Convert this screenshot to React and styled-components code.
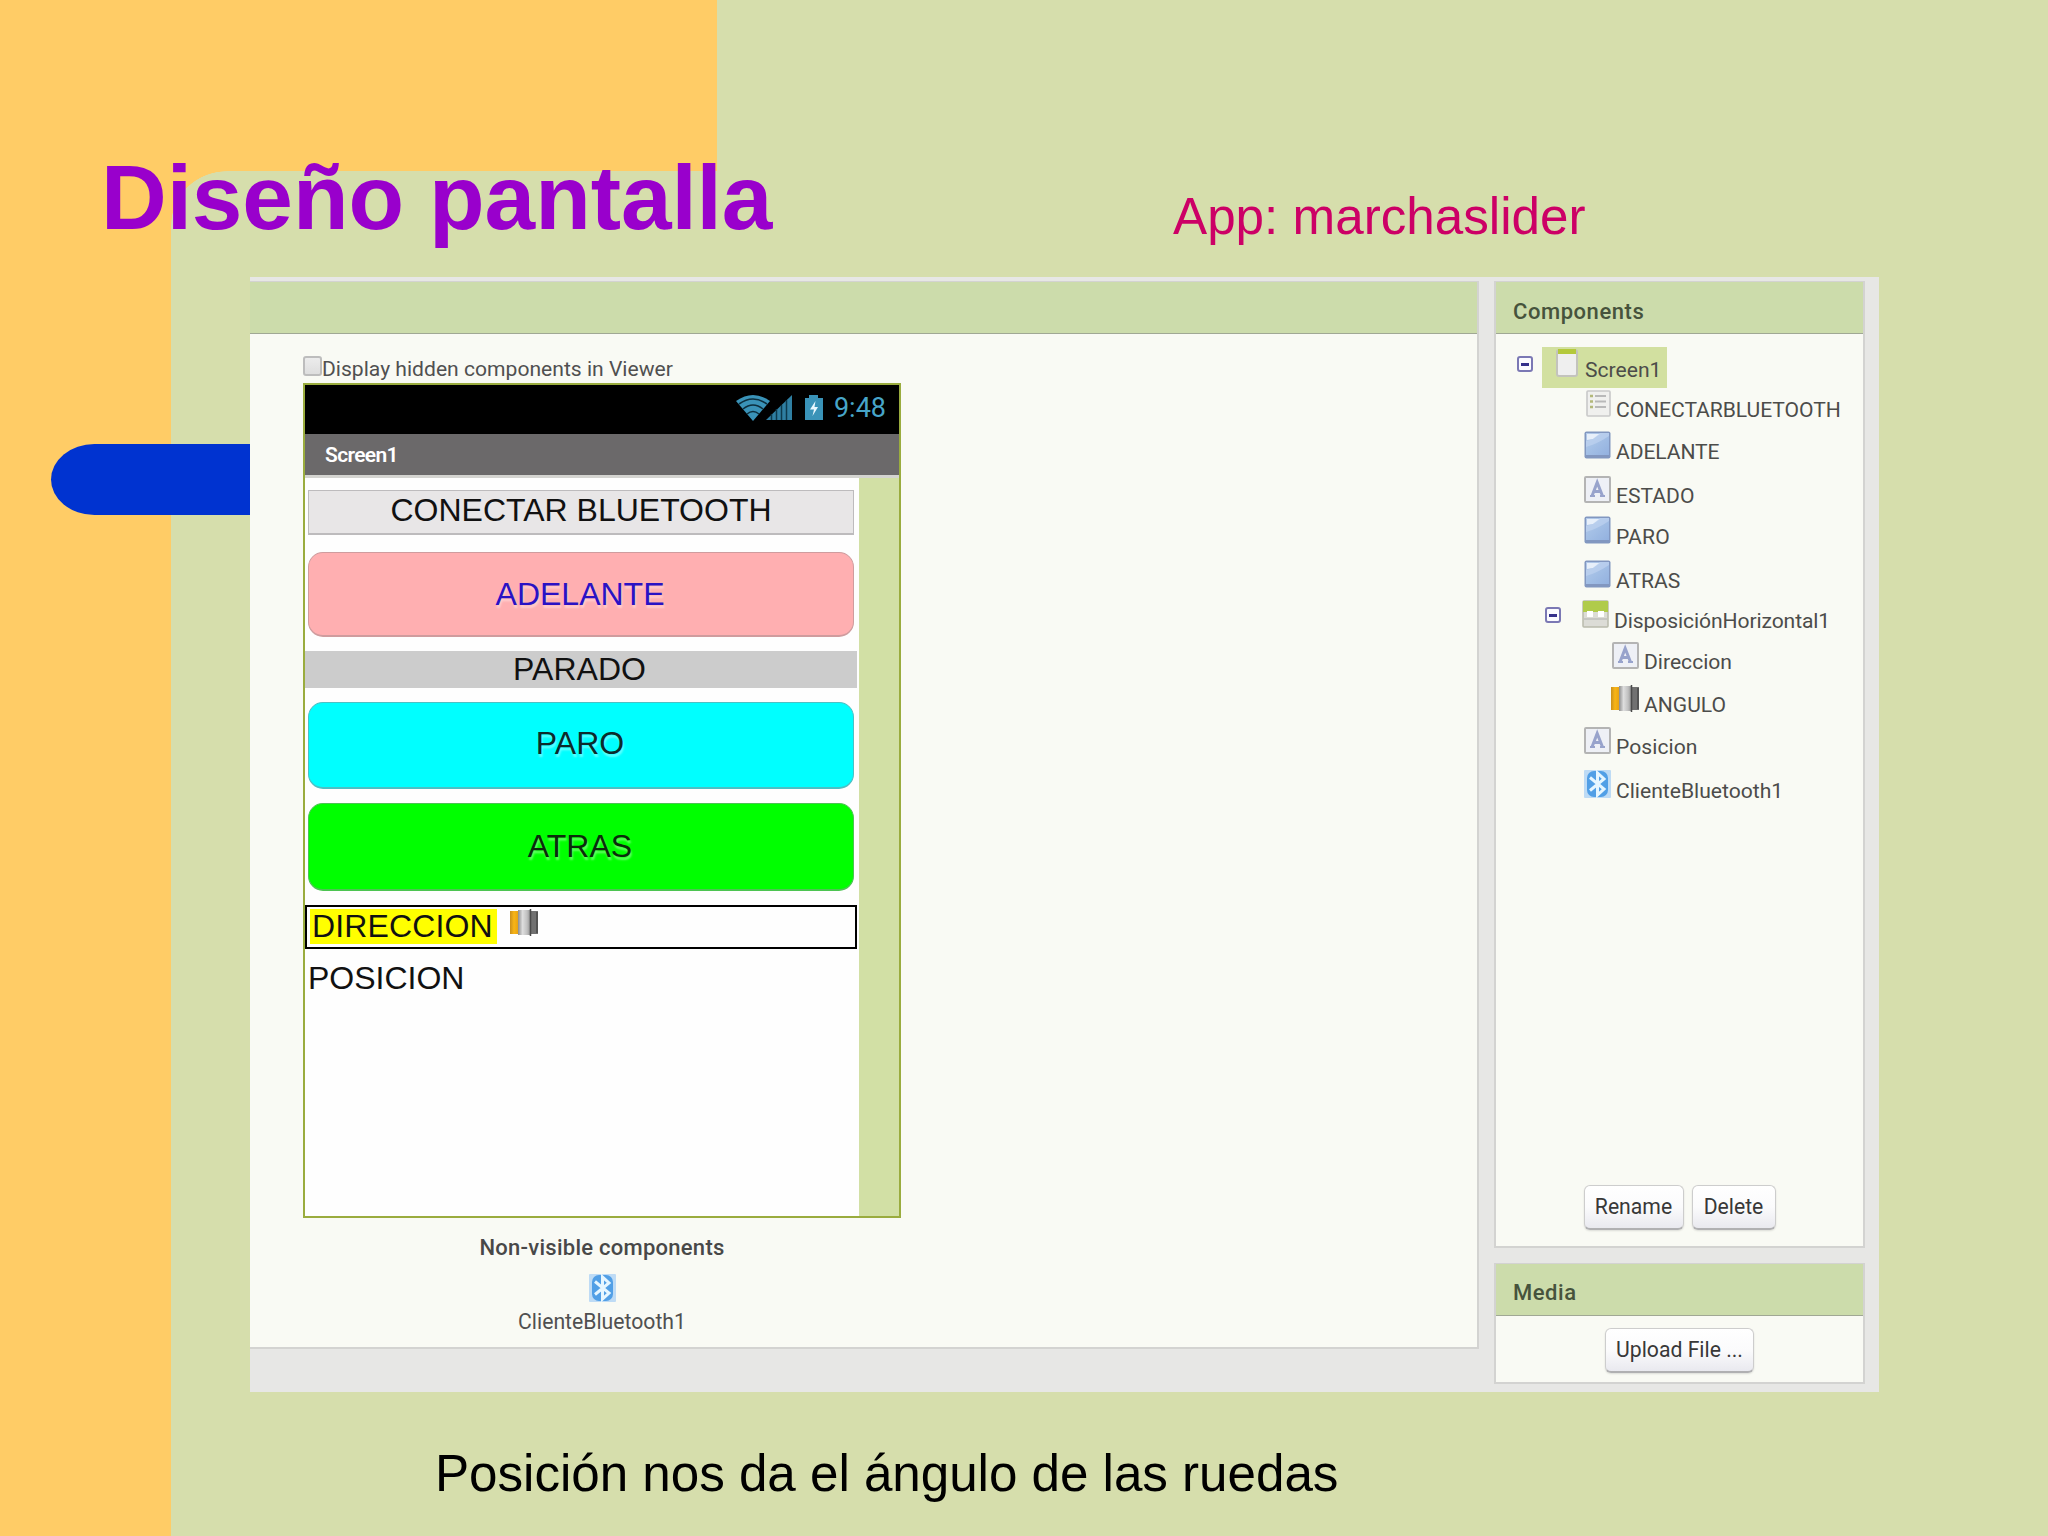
import React from "react";
import styled, { createGlobalStyle } from "styled-components";

const Global = createGlobalStyle`
  * { box-sizing: border-box; }
  html, body { margin: 0; padding: 0; }
  body { overflow: hidden; }
  svg { display: block; flex: none; }
`;

const sans = `"Liberation Sans", Arial, sans-serif`;
const ui = `Roboto, "Noto Sans", sans-serif`;

/* ---------- slide ---------- */

const Slide = styled.main`
  position: relative;
  width: 2048px;
  height: 1536px;
  overflow: hidden;
  background: #d6deac;
  font-family: ${sans};
`;

const Backdrop = styled.div`
  position: absolute;
  inset: 0;
  display: flex;
  flex-direction: column;
`;

const TopBand = styled.div`
  width: 717px;
  height: 171px;
  background: #ffcc66;
`;

const SideBand = styled.div`
  display: flex;
  flex: 1;
  &::before {
    content: "";
    width: 171px;
    background: #ffcc66;
  }
`;

const InnerCorner = styled.div`
  width: 56px;
  height: 54px;
  background: radial-gradient(ellipse 56px 54px at 100% 100%, transparent 99%, #ffcc66 100%);
`;

const Pill = styled.div`
  position: absolute;
  left: 51px;
  top: 443.5px;
  width: 260px;
  height: 71.5px;
  border-radius: 44px 0 0 44px / 36px 0 0 36px;
  background: #0033d0;
`;

const Content = styled.div`
  position: relative;
  display: flex;
  flex-direction: column;
  align-items: flex-start;
`;

const Heading = styled.header`
  display: flex;
  align-items: flex-start;
  height: 277px;
  padding-left: 101px;
`;

const Title = styled.h1`
  width: 1072px;
  margin: 146px 0 0;
  font-size: 91px;
  line-height: 104px;
  font-weight: 700;
  letter-spacing: -0.08px;
  color: #9900cc;
`;

const Subtitle = styled.p`
  margin: 187px 0 0;
  font-size: 51.2px;
  line-height: 60px;
  color: #cc0066;
  white-space: nowrap;
`;

const Caption = styled.p`
  margin: 52px 0 0 435px;
  font-size: 51.2px;
  line-height: 60px;
  letter-spacing: -0.04px;
  color: #000;
  white-space: nowrap;
`;

/* ---------- designer ---------- */

const Workspace = styled.section`
  display: flex;
  align-items: flex-start;
  gap: 15px;
  width: 1629px;
  height: 1115px;
  margin-left: 250px;
  padding-top: 4px;
  background: #e7e7e5;
  font-family: ${ui};
  color: #444;
`;

const Panel = styled.section`
  display: flex;
  flex-direction: column;
  width: ${(p) => p.$w}px;
  height: ${(p) => p.$h}px;
  background: #f9faf4;
  border: solid #d3d3d1;
  border-width: ${(p) => (p.$flushLeft ? "1px 2px 2px 0" : "1px 2px 2px 2px")};
`;

const PanelHeader = styled.h2`
  flex: none;
  height: 52px;
  margin: 0;
  padding: ${(p) => p.$drop || 8}px 0 0 17px;
  border-bottom: 1px solid #a0a894;
  background: #ccdcab;
  font-size: 22px;
  line-height: 43px;
  font-weight: 500;
  letter-spacing: 0.55px;
  color: #46533c;
`;

const SideColumn = styled.div`
  display: flex;
  flex-direction: column;
  gap: 15px;
`;

const ViewerBody = styled.div`
  display: flex;
  flex-direction: column;
  align-items: center;
  width: 598px;
  margin-left: 53px;
  padding-top: 21px;
`;

const HiddenToggle = styled.label`
  display: flex;
  align-items: center;
  align-self: flex-start;
  height: 28px;
  font-size: 21.1px;
  line-height: 28px;
  color: #505050;
  white-space: nowrap;
`;

const Box = styled.span`
  width: 19px;
  height: 20px;
  margin-bottom: 6px;
  border: 2px solid #bdbdbd;
  border-radius: 3px;
  background: linear-gradient(#ececec, #dedede);
`;

const NonVisibleTitle = styled.p`
  margin: 15px 0 0;
  font-size: 22px;
  line-height: 30px;
  font-weight: 500;
  letter-spacing: 0.26px;
  color: #484848;
`;

const NonVisibleItem = styled.div`
  display: flex;
  flex-direction: column;
  align-items: center;
  gap: 5px;
  margin-top: 11px;
  font-size: 21.2px;
  line-height: 29px;
  color: #505050;
`;

/* ---------- phone ---------- */

const Phone = styled.div`
  display: flex;
  flex-direction: column;
  width: 598px;
  height: 835px;
  border: 2px solid #9aac3e;
  background: #fefefe;
`;

const StatusBar = styled.div`
  display: flex;
  justify-content: flex-end;
  gap: 10px;
  height: 49px;
  padding: 9px 13px 0 0;
  background: #000;
  color: #47a5c9;
  font-size: 27px;
  line-height: 29px;
`;

const AppBar = styled.div`
  height: 44px;
  padding-left: 20px;
  border-bottom: 3px solid #d4d4d0;
  background: #6b696a;
  color: #fff;
  font-size: 21px;
  line-height: 42px;
  font-weight: 600;
  letter-spacing: -0.65px;
`;

const Screen = styled.div`
  display: flex;
  flex: 1;
  justify-content: space-between;
  &::after {
    content: "";
    width: 40px;
    background: #d2e0a5;
  }
`;

const ScreenColumn = styled.div`
  display: flex;
  flex-direction: column;
  width: 552px;
  padding-top: 12px;
  font-family: ${sans};
  font-size: 32px;
  color: #111;
`;

const ListPicker = styled.div`
  height: 45px;
  margin: 0 3px;
  border: 1px solid #bdbbbd;
  border-bottom-width: 2px;
  background: #e8e6e7;
  line-height: 39px;
  text-align: center;
`;

const RoundButton = styled.div`
  height: ${(p) => p.$h}px;
  margin: ${(p) => p.$top}px 3px 0;
  padding: 0 2px ${(p) => p.$lift || 0}px 0;
  border: solid ${(p) => p.$edge};
  border-width: 1px 1px 2px;
  border-radius: 15px;
  background: ${(p) => p.$bg};
  color: ${(p) => p.$fg};
  display: flex;
  align-items: center;
  justify-content: center;
  text-shadow: 1px 3px 2px rgba(255, 255, 255, 0.38);
`;

const StateLabel = styled.div`
  height: 37px;
  margin-top: 14px;
  padding-right: 3px;
  background: #cccccc;
  line-height: 37px;
  text-align: center;
`;

const Arrangement = styled.div`
  display: flex;
  gap: 13px;
  height: 44px;
  margin-top: 14px;
  padding: 2px 2px 2px 3px;
  border: 2px solid #000;
`;

const YellowLabel = styled.span`
  width: 187px;
  height: 35px;
  padding-left: 2px;
  background: #ffff00;
  line-height: 34px;
  letter-spacing: 0.12px;
  white-space: nowrap;
`;

const PositionLabel = styled.div`
  margin: 14px 0 0 3px;
  line-height: 30px;
`;

/* ---------- tree ---------- */

const Tree = styled.div`
  display: flex;
  flex-direction: column;
  padding-top: 13px;
  font-size: 21.1px;
  line-height: 28px;
  color: #4c4c4a;
`;

const RootRow = styled.div`
  display: flex;
  align-items: flex-start;
  gap: 9px;
  height: 41px;
  padding-left: 21px;
`;

const Selected = styled.div`
  display: flex;
  gap: 7px;
  width: 125px;
  height: 41px;
  padding: 2px 0 0 14px;
  background: #d2e0a0;
  & > span { margin-top: 7px; }
`;

const Row = styled.div`
  display: flex;
  align-items: flex-end;
  gap: 5px;
  height: ${(p) => p.$h}px;
  padding-left: ${(p) => p.$indent}px;
  letter-spacing: ${(p) => p.$track || 0}px;
  & > svg { margin-bottom: 7px; }
`;

const Toggle = styled.span`
  display: flex;
  align-items: center;
  justify-content: center;
  width: 16px;
  height: 16px;
  margin: ${(p) => p.$margin};
  border: 2px solid #7b78b4;
  border-radius: 3px;
  background: #fbfbff;
  &::before {
    content: "";
    width: 8px;
    height: 3px;
    background: #35308c;
  }
`;

const Actions = styled.div`
  display: flex;
  justify-content: center;
  gap: 8px;
  margin-top: ${(p) => p.$top};
  margin-bottom: ${(p) => p.$bottom || 0}px;
`;

const PushButton = styled.button`
  width: ${(p) => p.$w}px;
  height: 45px;
  padding: 0 0 2px;
  border: 1px solid #cdcdcd;
  border-bottom: 2px solid #b0b0b2;
  border-radius: 6px;
  background: linear-gradient(#ffffff, #fbfbfc 50%, #e9e9ef);
  box-shadow: 0 1px 2px rgba(0, 0, 0, 0.12);
  font-family: ${ui};
  font-size: 21.2px;
  color: #383838;
  white-space: nowrap;
`;

/* ---------- icons ---------- */

const BluetoothIcon = () => (
  <svg width="27" height="28" viewBox="0 0 27 28">
    <rect width="27" height="28" rx="1" fill="#bedbf5" />
    <rect x="3" y="1" width="21" height="26" rx="7" fill="#519fe6" />
    <path d="M6 7.500 L20 19 L13.500 25 V3 L20 9 L6 20.500" fill="none" stroke="#e6f6ff" strokeWidth="3" />
  </svg>
);

const ButtonIcon = () => (
  <svg width="27" height="28" viewBox="0 0 27 28">
    <defs>
      <linearGradient id="blueFace" x1="0" y1="0" x2="1" y2="1">
        <stop offset="0" stopColor="#b4cae8" />
        <stop offset="0.45" stopColor="#a4c0e6" />
        <stop offset="1" stopColor="#93b1df" />
      </linearGradient>
    </defs>
    <rect x="0.5" y="0.5" width="26" height="27" rx="2" fill="#8297c0" />
    <rect x="2" y="2" width="23" height="22" fill="url(#blueFace)" />
    <path d="M3 3 H16 L9 8 L3 9 Z" fill="#e7effa" />
    <path d="M2 16 Q13 13 25 5 V2 H16 L9 8 L2 10 Z" fill="#c3d6f1" opacity="0.6" />
  </svg>
);

const LabelIcon = () => (
  <svg width="27" height="27" viewBox="0 0 27 27">
    <rect x="1" y="1" width="25" height="25" rx="1" fill="#eef0f6" stroke="#b4b4b4" strokeWidth="2" />
    <path d="M8 20 L13.200 6.500 L18.500 20 M10 15.500 H17" fill="none" stroke="#98a3cc" strokeWidth="3" />
    <path d="M6 20 H11 M16 20 H21" stroke="#98a3cc" strokeWidth="2" />
  </svg>
);

const ListIcon = () => (
  <svg width="25" height="27" viewBox="0 0 25 27">
    <rect x="1" y="1" width="23" height="25" rx="1" fill="#f0f0ee" stroke="#c9c9c9" strokeWidth="1.600" />
    <path d="M9 6 H20 M9 11.500 H20 M9 17 H20" stroke="#b9b9b9" strokeWidth="2.200" />
    <path d="M4 6 H7 M4 11.500 H7 M4 17 H7" stroke="#b3b87a" strokeWidth="2.600" />
  </svg>
);

const ScreenIcon = () => (
  <svg width="22" height="28" viewBox="0 0 22 28">
    <rect x="1" y="1" width="20" height="26" rx="2" fill="#efefef" stroke="#c3c3bd" strokeWidth="2" />
    <path d="M2 0 H20 V5 H2 Z" fill="#b4c93c" />
  </svg>
);

const HorizontalIcon = () => (
  <svg width="27" height="28" viewBox="0 0 27 28">
    <rect x="1" y="1" width="25" height="26" rx="1" fill="#dcdcd6" stroke="#b9bbac" strokeWidth="1.500" />
    <path d="M1 1 H26 V12 H1 Z" fill="#b0cb4a" />
    <path d="M5 11 H11 V17 H5 Z M16 11 H22 V17 H16 Z" fill="#fff" />
    <path d="M2 19 H25" stroke="#c6c6c2" strokeWidth="2" />
  </svg>
);

const SliderIcon = () => (
  <svg width="28" height="27" viewBox="0 0 28 27">
    <defs>
      <linearGradient id="amber" x1="0" x2="1">
        <stop offset="0" stopColor="#c98f1c" />
        <stop offset="0.4" stopColor="#f8b516" />
        <stop offset="1" stopColor="#e09a10" />
      </linearGradient>
      <linearGradient id="steel" x1="0" x2="1">
        <stop offset="0" stopColor="#8c8c8c" />
        <stop offset="0.35" stopColor="#dedede" />
        <stop offset="0.7" stopColor="#c0c0c0" />
        <stop offset="1" stopColor="#8a8a8a" />
      </linearGradient>
    </defs>
    <rect x="0" y="2" width="10" height="23" fill="url(#amber)" />
    <rect x="8" y="1" width="13" height="25" fill="url(#steel)" />
    <rect x="21" y="2" width="7" height="23" fill="#717171" />
    <path d="M20.500 0 V27 M27 3 V24" stroke="#4a4a4a" strokeWidth="1.500" />
  </svg>
);

const StatusIcons = () => (
  <svg width="88" height="28" viewBox="0 0 88 28">
    <path d="M0 7 Q17 -5 34 7 L17 27 Z" fill="#3a93b8" />
    <path d="M3 10 Q17 0 31 10 M7 15 Q17 7 27 15 M11 20 Q17 15 23 20" fill="none" stroke="#0d2f3e" strokeWidth="1.600" />
    <path d="M30 26 L56 1 V26 Z" fill="#2f7fa2" />
    <path d="M35.500 20 V26 M40.500 15 V26 M45.500 11 V26 M50.500 6 V26" stroke="#0d3a4d" strokeWidth="1.500" />
    <path d="M69 4 H73 V1 H82 V4 H87 V26 H69 Z" fill="#3a93b8" />
    <path d="M79.500 7 L74 15.500 H78 L76.500 22 L82 13 H78.500 Z" fill="#eaf8ff" />
  </svg>
);

const treeItems = [
  { label: "CONECTARBLUETOOTH", icon: ListIcon, h: 36, indent: 90, track: -0.06 },
  { label: "ADELANTE", icon: ButtonIcon, h: 42, indent: 88, track: -0.1 },
  { label: "ESTADO", icon: LabelIcon, h: 44, indent: 88 },
  { label: "PARO", icon: ButtonIcon, h: 41, indent: 88, track: 0.2 },
  { label: "ATRAS", icon: ButtonIcon, h: 44, indent: 88 },
  { label: "DisposiciónHorizontal1", icon: HorizontalIcon, h: 40, indent: 49, toggle: true, track: -0.1 },
  { label: "Direccion", icon: LabelIcon, h: 41, indent: 116 },
  { label: "ANGULO", icon: SliderIcon, h: 43, indent: 115 },
  { label: "Posicion", icon: LabelIcon, h: 42, indent: 88, track: 0.05 },
  { label: "ClienteBluetooth1", icon: BluetoothIcon, h: 44, indent: 88 },
];

const PhonePreview = () => (
  <Phone>
    <StatusBar>
      <StatusIcons />
      <span>9:48</span>
    </StatusBar>
    <AppBar>Screen1</AppBar>
    <Screen>
      <ScreenColumn>
        <ListPicker>CONECTAR BLUETOOTH</ListPicker>
        <RoundButton $h={85} $top={17} $bg="#ffafb1" $fg="#2a12c4" $edge="#cf9c9e">ADELANTE</RoundButton>
        <StateLabel>PARADO</StateLabel>
        <RoundButton $h={87} $top={14} $lift={4} $bg="#00ffff" $fg="#0b2b2b" $edge="#4cc0c4">PARO</RoundButton>
        <RoundButton $h={88} $top={14} $bg="#00ff00" $fg="#0b2b0b" $edge="#4cc452">ATRAS</RoundButton>
        <Arrangement>
          <YellowLabel>DIRECCION</YellowLabel>
          <SliderIcon />
        </Arrangement>
        <PositionLabel>POSICION</PositionLabel>
      </ScreenColumn>
    </Screen>
  </Phone>
);

export default function App() {
  return (
    <Slide>
      <Global />
      <Backdrop>
        <TopBand />
        <SideBand>
          <InnerCorner />
        </SideBand>
      </Backdrop>
      <Pill />
      <Content>
        <Heading>
          <Title>Diseño pantalla</Title>
          <Subtitle>App: marchaslider</Subtitle>
        </Heading>
        <Workspace>
          <Panel $w={1229} $h={1068} $flushLeft>
            <PanelHeader />
            <ViewerBody>
              <HiddenToggle>
                <Box />
                Display hidden components in Viewer
              </HiddenToggle>
              <PhonePreview />
              <NonVisibleTitle>Non-visible components</NonVisibleTitle>
              <NonVisibleItem>
                <BluetoothIcon />
                ClienteBluetooth1
              </NonVisibleItem>
            </ViewerBody>
          </Panel>
          <SideColumn>
            <Panel $w={371} $h={967}>
              <PanelHeader>Components</PanelHeader>
              <Tree>
                <RootRow>
                  <Toggle $margin="9px 0 0" />
                  <Selected>
                    <ScreenIcon />
                    <span>Screen1</span>
                  </Selected>
                </RootRow>
                {treeItems.map(({ label, icon: Icon, h, indent, track, toggle }) => (
                  <Row key={label} $h={h} $indent={indent} $track={track}>
                    {toggle && <Toggle $margin="0 16px 12px 0" />}
                    <Icon />
                    <span>{label}</span>
                  </Row>
                ))}
              </Tree>
              <Actions $top="auto" $bottom={16}>
                <PushButton $w={100}>Rename</PushButton>
                <PushButton $w={84}>Delete</PushButton>
              </Actions>
            </Panel>
            <Panel $w={371} $h={121}>
              <PanelHeader $drop={7}>Media</PanelHeader>
              <Actions $top="12px">
                <PushButton $w={149}>Upload File ...</PushButton>
              </Actions>
            </Panel>
          </SideColumn>
        </Workspace>
        <Caption>Posición nos da el ángulo de las ruedas</Caption>
      </Content>
    </Slide>
  );
}
